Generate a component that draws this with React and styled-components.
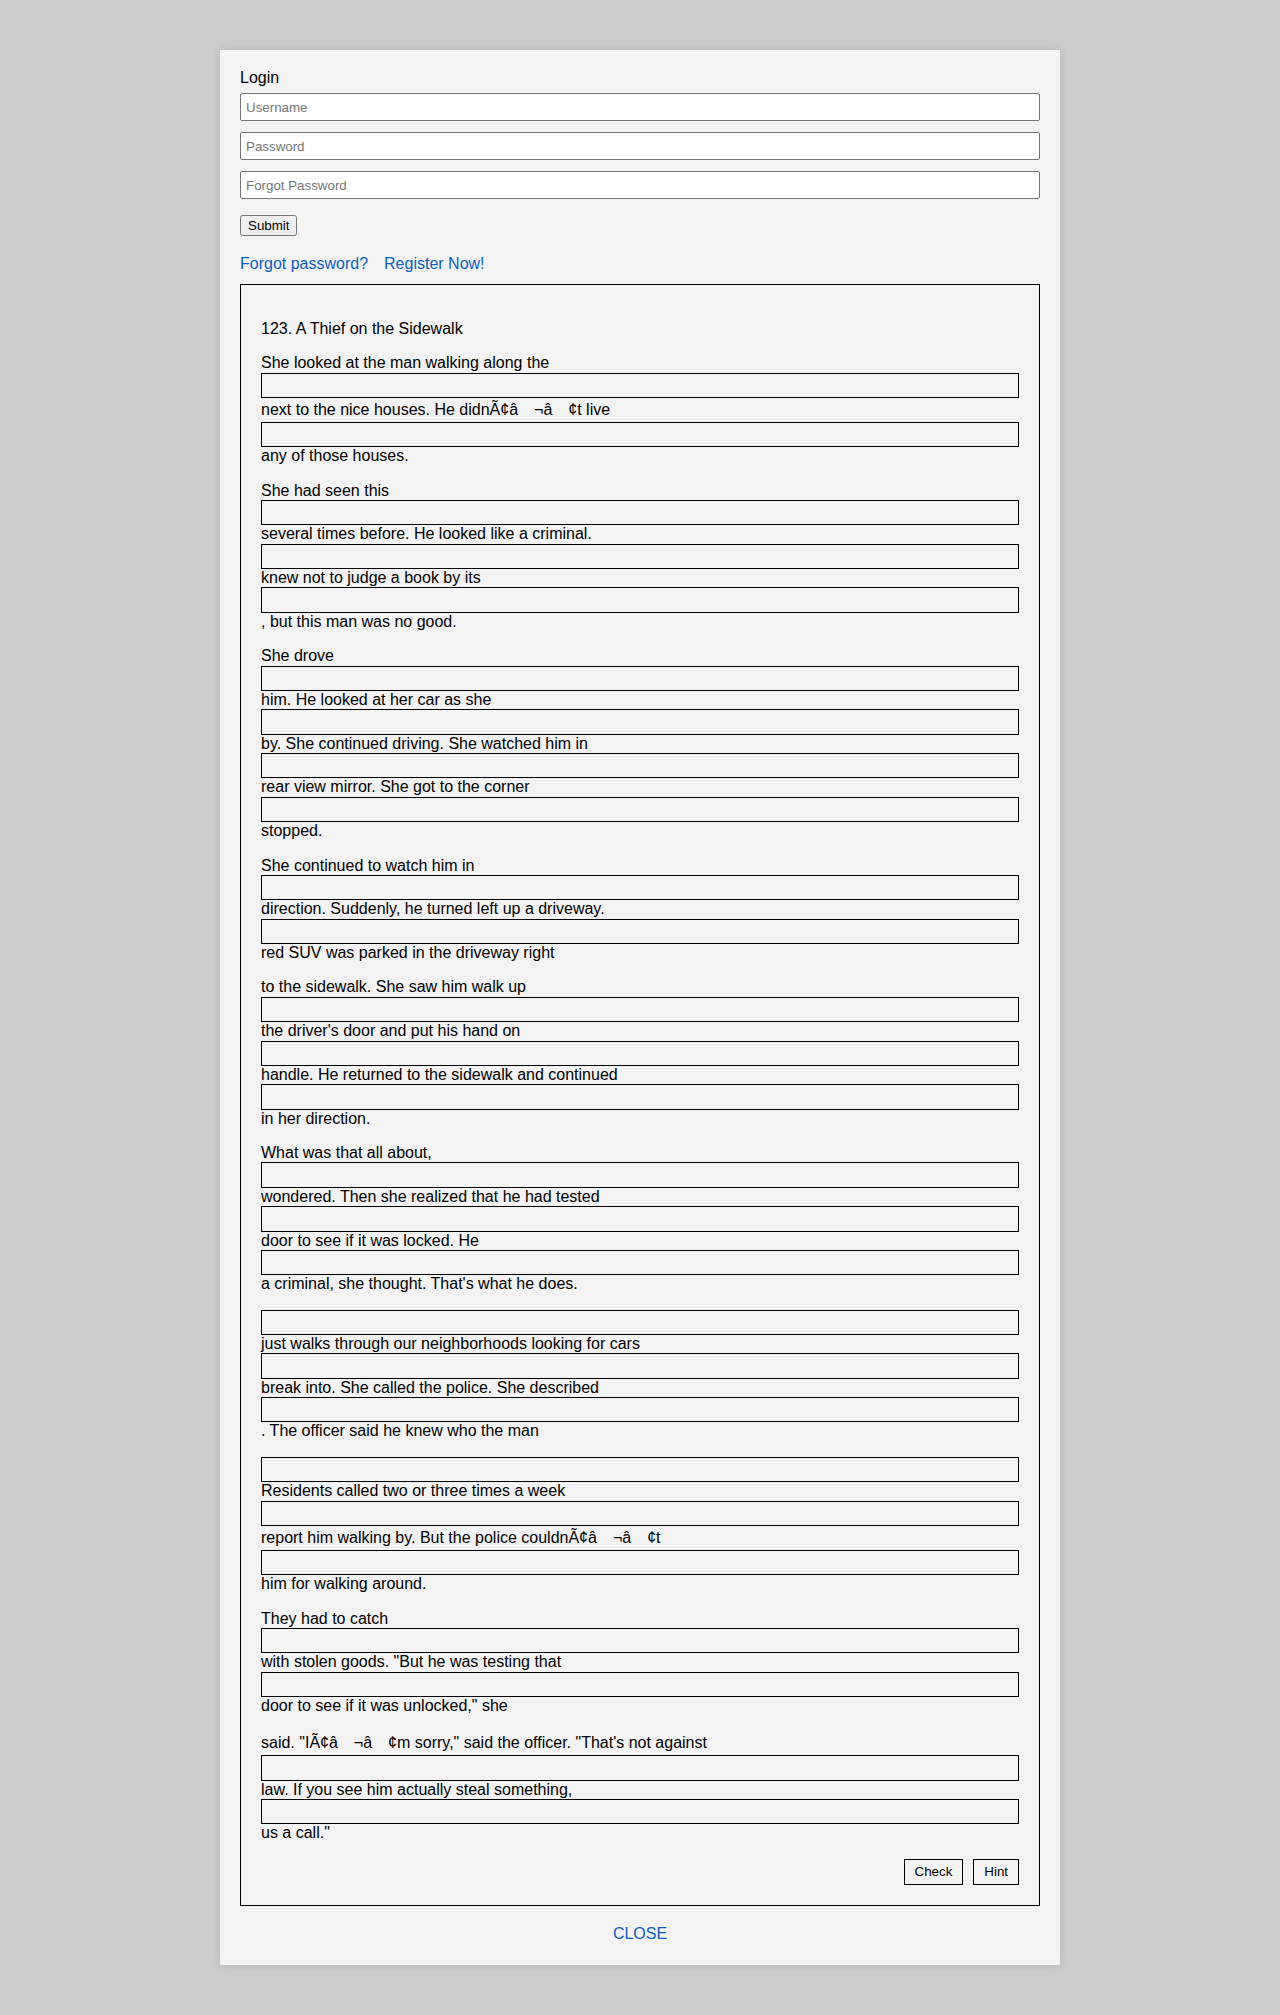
import React from "react";
import styled, { createGlobalStyle } from "styled-components";

const GlobalStyle = createGlobalStyle`
  html, body {
    margin: 0;
    padding: 0;
    background: #cccccc;
  }
  body {
    font-family: "Liberation Sans", Arial, sans-serif;
    color: #000;
  }
`;

const Page = styled.div`
  padding: 50px 0;
`;

const Panel = styled.div`
  width: 840px;
  margin: 0 auto;
  box-sizing: border-box;
  padding: 19px 20px 21px;
  background: #f3f3f3;
  box-shadow: 0 0 8px rgba(0, 0, 0, 0.12);
  font-size: 16px;
  line-height: 18.4px;
`;

const LoginForm = styled.form`
  display: flex;
  flex-direction: column;
  margin: 0;
`;

const LoginTitle = styled.div`
  margin: 0 0 6px;
  font-size: 16px;
`;

const Fields = styled.div`
  display: flex;
  flex-direction: column;
  gap: 11px;
`;

const TextField = styled.input`
  display: block;
  width: 100%;
  height: 28px;
  box-sizing: border-box;
  margin: 0;
  padding: 0 5px;
  border: 1px solid #767676;
  border-radius: 2px;
  background: #fff;
  font-family: "Liberation Sans", Arial, sans-serif;
  font-size: 13.333px;
  color: #000;
  &::placeholder {
    color: #757575;
  }
`;

const SubmitButton = styled.button`
  align-self: flex-start;
  margin-top: 16px;
  font-family: "Liberation Sans", Arial, sans-serif;
  font-size: 13.333px;
`;

const LinkRow = styled.div`
  display: flex;
  gap: 16px;
  margin-top: 19px;
`;

const Link = styled.a`
  color: #0b5dc2;
  text-decoration: none;
  font-size: 16px;
  cursor: pointer;
`;

const StoryBox = styled.div`
  margin-top: 10px;
  border: 1px solid #000;
  padding: 19px 20px 20px;
`;

const Para = styled.p`
  margin: 16px 0;
  font-size: 16px;
  line-height: 18.4px;
`;

const Line = styled.span`
  display: block;
  padding: ${(p) => (p.$tall ? "3px 0 2.5px" : "0")};
`;

const Ctrl = styled.span`
  padding-right: 3px;
`;

const Blank = styled.input`
  display: block;
  width: 100%;
  height: 25.33px;
  box-sizing: border-box;
  margin: 0;
  padding: 0 2px;
  border: 1px solid #000;
  border-radius: 0;
  background: transparent;
  font-family: "Liberation Sans", Arial, sans-serif;
  font-size: 13.333px;
  outline: none;
`;

const ButtonRow = styled.div`
  display: flex;
  justify-content: flex-end;
  gap: 10px;
`;

const ActionButton = styled.button`
  height: 26.4px;
  padding: 0 10px;
  border: 1px solid #000;
  border-radius: 0;
  background: transparent;
  color: #000;
  font-family: "Liberation Sans", Arial, sans-serif;
  font-size: 13.333px;
  cursor: pointer;
`;

const CloseLink = styled.a`
  display: block;
  margin-top: 19px;
  text-align: center;
  color: #0b5dc2;
  font-size: 16px;
  text-decoration: none;
  cursor: pointer;
`;

/* Mis-encoded apostrophe exactly as on the page: Ã¢â<U+0082>¬â<U+0084>¢ */
const Moji = () => (
  <>
    {"\u00C3\u00A2\u00E2"}
    <Ctrl>{"\u0082"}</Ctrl>
    {"\u00AC\u00E2"}
    <Ctrl>{"\u0084"}</Ctrl>
    {"\u00A2"}
  </>
);

const _ = null;

const paragraphs = [
  ["123. A Thief on the Sidewalk"],
  [
    "She looked at the man walking along the",
    _,
    ["next to the nice houses. He didn", "t live"],
    _,
    "any of those houses.",
  ],
  [
    "She had seen this",
    _,
    "several times before. He looked like a criminal.",
    _,
    "knew not to judge a book by its",
    _,
    ", but this man was no good.",
  ],
  [
    "She drove",
    _,
    "him. He looked at her car as she",
    _,
    "by. She continued driving. She watched him in",
    _,
    "rear view mirror. She got to the corner",
    _,
    "stopped.",
  ],
  [
    "She continued to watch him in",
    _,
    "direction. Suddenly, he turned left up a driveway.",
    _,
    "red SUV was parked in the driveway right",
  ],
  [
    "to the sidewalk. She saw him walk up",
    _,
    "the driver's door and put his hand on",
    _,
    "handle. He returned to the sidewalk and continued",
    _,
    "in her direction.",
  ],
  [
    "What was that all about,",
    _,
    "wondered. Then she realized that he had tested",
    _,
    "door to see if it was locked. He",
    _,
    "a criminal, she thought. That's what he does.",
  ],
  [
    _,
    "just walks through our neighborhoods looking for cars",
    _,
    "break into. She called the police. She described",
    _,
    ". The officer said he knew who the man",
  ],
  [
    _,
    "Residents called two or three times a week",
    _,
    ["report him walking by. But the police couldn", "t"],
    _,
    "him for walking around.",
  ],
  [
    "They had to catch",
    _,
    'with stolen goods. "But he was testing that',
    _,
    'door to see if it was unlocked," she',
  ],
  [
    ['said. "I', 'm sorry," said the officer. "That\'s not against'],
    _,
    "law. If you see him actually steal something,",
    _,
    'us a call."',
  ],
];

const renderPiece = (piece, i) => {
  if (piece === null) return <Blank key={i} type="text" />;
  if (Array.isArray(piece)) {
    return (
      <Line key={i} $tall>
        {piece[0]}
        <Moji />
        {piece[1]}
      </Line>
    );
  }
  return <Line key={i}>{piece}</Line>;
};

export default function App() {
  return (
    <>
      <GlobalStyle />
      <Page>
        <Panel>
          <LoginForm onSubmit={(e) => e.preventDefault()}>
            <LoginTitle>Login</LoginTitle>
            <Fields>
              <TextField type="text" placeholder="Username" />
              <TextField type="password" placeholder="Password" />
              <TextField type="text" placeholder="Forgot Password" />
            </Fields>
            <SubmitButton type="submit">Submit</SubmitButton>
          </LoginForm>
          <LinkRow>
            <Link>Forgot password?</Link>
            <Link>Register Now!</Link>
          </LinkRow>
          <StoryBox>
            {paragraphs.map((para, pi) => (
              <Para key={pi}>{para.map(renderPiece)}</Para>
            ))}
            <ButtonRow>
              <ActionButton type="button">Check</ActionButton>
              <ActionButton type="button">Hint</ActionButton>
            </ButtonRow>
          </StoryBox>
          <CloseLink>CLOSE</CloseLink>
        </Panel>
      </Page>
    </>
  );
}
